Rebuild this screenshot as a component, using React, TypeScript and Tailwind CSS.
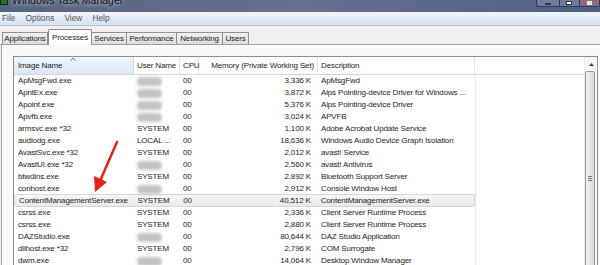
import React from 'react';

type Row = {
  name: string;
  user: string | null;
  mem: string;
  desc: string;
  selected?: boolean;
};

const rows: Row[] = [
  { name: 'ApMsgFwd.exe', user: null, mem: '3,336 K', desc: 'ApMsgFwd' },
  { name: 'ApntEx.exe', user: null, mem: '3,872 K', desc: 'Alps Pointing-device Driver for Windows ...' },
  { name: 'Apoint.exe', user: null, mem: '5,376 K', desc: 'Alps Pointing-device Driver' },
  { name: 'Apvfb.exe', user: null, mem: '3,024 K', desc: 'APVFB' },
  { name: 'armsvc.exe *32', user: 'SYSTEM', mem: '1,100 K', desc: 'Adobe Acrobat Update Service' },
  { name: 'audiodg.exe', user: 'LOCAL ...', mem: '18,636 K', desc: 'Windows Audio Device Graph Isolation' },
  { name: 'AvastSvc.exe *32', user: 'SYSTEM', mem: '2,012 K', desc: 'avast! Service' },
  { name: 'AvastUI.exe *32', user: null, mem: '2,560 K', desc: 'avast! Antivirus' },
  { name: 'btwdins.exe', user: 'SYSTEM', mem: '2,892 K', desc: 'Bluetooth Support Server' },
  { name: 'conhost.exe', user: null, mem: '2,912 K', desc: 'Console Window Host' },
  { name: 'ContentManagementServer.exe', user: 'SYSTEM', mem: '40,512 K', desc: 'ContentManagementServer.exe', selected: true },
  { name: 'csrss.exe', user: 'SYSTEM', mem: '2,336 K', desc: 'Client Server Runtime Process' },
  { name: 'csrss.exe', user: 'SYSTEM', mem: '2,880 K', desc: 'Client Server Runtime Process' },
  { name: 'DAZStudio.exe', user: null, mem: '80,644 K', desc: 'DAZ Studio Application' },
  { name: 'dllhost.exe *32', user: 'SYSTEM', mem: '2,796 K', desc: 'COM Surrogate' },
  { name: 'dwm.exe', user: null, mem: '14,064 K', desc: 'Desktop Window Manager' },
];

const tabs = [
  { name: 'Applications', w: 'w-[46px]' },
  { name: 'Processes', w: 'w-[44px]', active: true },
  { name: 'Services', w: 'w-[36px]' },
  { name: 'Performance', w: 'w-[51px]' },
  { name: 'Networking', w: 'w-[47px]' },
  { name: 'Users', w: 'w-[27px]' },
];

const ProcessRow = ({ row }: { row: Row }) => (
  <div className="flex h-[12px] shrink-0">
    <div
      className={
        'flex w-[461px] items-center ' +
        (row.selected
          ? 'bg-gradient-to-b from-[#f7f7f7] to-[#e9e9e9] border border-[#d6d6d6] rounded-[2px] -my-[1px] h-[13px]'
          : '')
      }
    >
      <div className="w-[120px] pl-[4px] whitespace-nowrap">{row.name}</div>
      <div className="w-[46px] pl-[3px] whitespace-nowrap">
        {row.user ? row.user : <div className="h-[9px] w-[25px] bg-[#c4c4c4] blur-[1.5px] rounded-sm" />}
      </div>
      <div className="w-[19px] pl-[3px]">00</div>
      <div className="w-[119px] pr-[7px] text-right whitespace-nowrap">{row.mem}</div>
      <div className="w-[157px] pl-[3px] whitespace-nowrap overflow-hidden">{row.desc}</div>
    </div>
    <div className="w-[109px] border-l border-[#e6ebf2]" />
  </div>
);

export default function App() {
  return (
    <div className="relative w-[600px] h-[265px] overflow-hidden bg-[#f0f0f0] font-['Liberation_Sans',Arial,sans-serif] text-[8px] tracking-[-0.15px] text-[#1e1e1e] flex flex-col">
      {/* title bar */}
      <div className="h-[12px] shrink-0 flex items-start overflow-hidden bg-gradient-to-r from-[#54657f] via-[#667093] to-[#4d5f86] relative">
        <div className="w-[8px] h-[5px] bg-[#2e6b2a] border border-[#1b2a1b] border-t-0" />
        <div className="ml-[4px] -mt-[6px] text-[10.5px] leading-[12px] text-[#111] tracking-normal [text-shadow:0_0_5px_rgba(255,255,255,0.9)]">
          Windows Task Manager
        </div>
        <div className="absolute right-0 top-0 flex h-[7px] gap-[2px] rounded-b-[3px] border border-t-0 border-[#2c3a58] bg-[#6f7c9c] pl-[2px]">
          <div className="w-[18px] flex items-end justify-center pb-[1px]">
            <div className="w-[6px] h-[2px] bg-white border border-[#333]" />
          </div>
          <div className="w-[18px] border-l border-[#2c3a58] flex items-end justify-center pb-[1px]">
            <div className="w-[6px] h-[4px] bg-white border border-[#333]" />
          </div>
          <div className="w-[20px] border-l border-[#2c3a58] bg-[#8c6a78] flex items-end justify-center pb-[1px]">
            <div className="w-[5px] h-[4px] bg-white/80" />
          </div>
        </div>
      </div>

      {/* menu bar */}
      <div className="h-[14px] shrink-0 flex items-center gap-[10px] pl-[2px] bg-gradient-to-b from-[#f4f7fc] via-[#e2e9f6] to-[#d8e1f2] border-b border-[#b7bfd0] text-[8.4px] tracking-normal text-[#555]">
        <span>File</span>
        <span>Options</span>
        <span>View</span>
        <span>Help</span>
      </div>

      {/* tabs */}
      <div className="h-[19px] shrink-0 flex items-end pl-[2px] border-b border-[#a0a0a0] bg-[#f0f0f0]">
        {tabs.map((t) =>
          t.active ? (
            <div
              key={t.name}
              className={`${t.w} h-[16px] -mb-[1px] flex items-center justify-center bg-white border border-b-0 border-[#8c8c8c] rounded-t-[2px] z-10`}
            >
              {t.name}
            </div>
          ) : (
            <div
              key={t.name}
              className={`${t.w} h-[12px] flex items-center justify-center bg-gradient-to-b from-[#f2f2f2] to-[#dcdcdc] border border-b-0 border-[#8e8f8f] -ml-[1px] first:ml-0`}
            >
              {t.name}
            </div>
          )
        )}
      </div>

      {/* tab page */}
      <div className="flex-1 shrink-0 ml-[1px] border-l border-[#a4a4a4] bg-[#fafafa] pl-[11px] pt-[11px]">
        <div className="w-[585px] border border-[#8a8f98] bg-white flex">
          <div className="flex flex-col">
            {/* header */}
            <div className="h-[18px] shrink-0 flex border-b border-[#d5d5d5]">
              <div className="relative w-[120px] pl-[4px] flex items-center bg-gradient-to-b from-[#eef5fc] to-[#dbe8f6] border-r border-[#cbd9e8]">
                Image Name
                <svg className="absolute left-[56px] top-[0px]" width="6" height="4" viewBox="0 0 6 4">
                  <path d="M0.5 3.5 L3 1 L5.5 3.5" fill="none" stroke="#6d7480" strokeWidth="1" />
                </svg>
              </div>
              <div className="w-[46px] pl-[3px] flex items-center border-r border-[#e3e3e3] whitespace-nowrap">User Name</div>
              <div className="w-[19px] pl-[3px] flex items-center border-r border-[#e3e3e3]">CPU</div>
              <div className="w-[119px] pr-[3px] flex items-center justify-end border-r border-[#e3e3e3] whitespace-nowrap">
                Memory (Private Working Set)
              </div>
              <div className="w-[157px] pl-[3px] flex items-center border-r border-[#e3e3e3]">Description</div>
              <div className="w-[109px]" />
            </div>
            {/* rows */}
            {rows.map((r, i) => (
              <ProcessRow key={i} row={r} />
            ))}
          </div>

          {/* scrollbar */}
          <div className="w-[13px] flex flex-col bg-[#f4f4f4] border-l border-[#ececec]">
            <div className="h-[14px] flex items-center justify-center">
              <svg width="5" height="3" viewBox="0 0 5 3">
                <path d="M0 3 L2.5 0 L5 3 Z" fill="#3c3c3c" />
              </svg>
            </div>
            <div className="flex-1 w-[10px] border border-[#9b9b9b] rounded-[2px] bg-gradient-to-r from-[#f2f2f2] to-[#dcdcdc] flex flex-col items-center pt-[104px]">
              <div className="w-[4px] h-[1px] bg-[#777] mb-[1px]" />
              <div className="w-[4px] h-[1px] bg-[#777] mb-[1px]" />
              <div className="w-[4px] h-[1px] bg-[#777]" />
            </div>
          </div>
        </div>
      </div>

      {/* red annotation arrow */}
      <svg className="absolute left-0 top-0 pointer-events-none" width="600" height="265">
        <line x1="117" y1="142" x2="100" y2="181" stroke="#e2231a" strokeWidth="2.5" strokeLinecap="round" />
        <polygon points="95,192 107,182 94,176" fill="#e2231a" />
      </svg>
    </div>
  );
}
